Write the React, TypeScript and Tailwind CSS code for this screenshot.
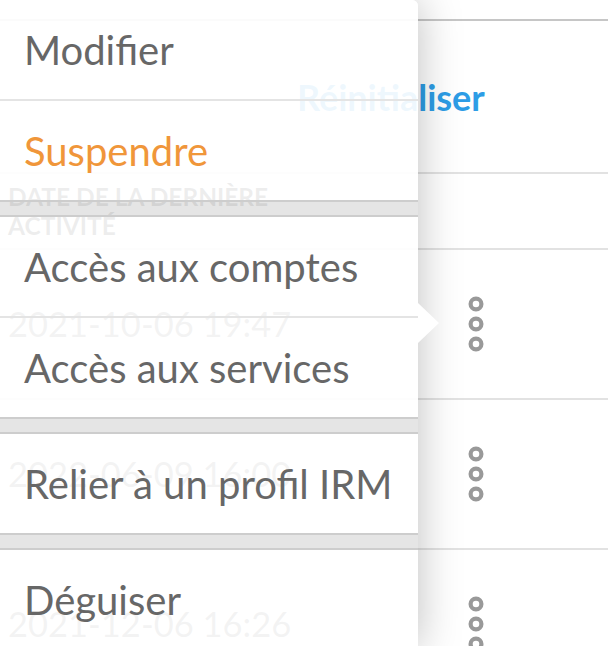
const menuGroups = [
  [
    { label: "Modifier", warn: false },
    { label: "Suspendre", warn: true },
  ],
  [
    { label: "Accès aux comptes", warn: false },
    { label: "Accès aux services", warn: false },
  ],
  [{ label: "Relier à un profil IRM", warn: false }],
  [{ label: "Déguiser", warn: false }],
];

const activityDates = ["2021-10-06 19:47", "2022-06-09 16:00", "2021-12-06 16:26"];

const KebabIcon = () => (
  <svg width="18" height="58" viewBox="0 0 18 58" fill="none">
    <circle cx="9" cy="9" r="5.4" stroke="#999999" strokeWidth="4.2" />
    <circle cx="9" cy="29" r="5.4" stroke="#999999" strokeWidth="4.2" />
    <circle cx="9" cy="49" r="5.4" stroke="#999999" strokeWidth="4.2" />
  </svg>
);

const ActionMenu = () => {
  return (
    <div className="absolute top-0 left-0 w-[418px] rounded-tr-[6px] shadow-[0_0_44px_rgba(0,0,0,0.26)]">
      {menuGroups.map((group, gi) => (
        <div key={gi}>
          {gi > 0 && (
            <div className="h-[17px] bg-[#e3e3e3]/[0.92] border-y-2 border-[#cdcdcd]" />
          )}
          {group.map((item, ii) => (
            <div
              key={item.label}
              className={`h-[99px] flex items-center pl-[24px] bg-white/[0.92] text-[40px] ${
                ii < group.length - 1 ? "border-b-2 border-[#e4e4e4] box-content" : ""
              } ${gi === 0 && ii === 0 ? "rounded-tr-[6px]" : ""} ${
                item.warn ? "text-[#f0963a]" : "text-[#676767]"
              }`}
            >
              {item.label}
            </div>
          ))}
        </div>
      ))}
      <div className="absolute left-full top-[303px] w-0 h-0 border-y-[20px] border-y-transparent border-l-[21px] border-l-white" />
    </div>
  );
};

export default function App() {
  return (
    <div
      className="relative w-full h-[646px] overflow-hidden bg-white"
      style={{ fontFamily: "Lato, 'Noto Sans', sans-serif" }}
    >
      <div className="h-[19px] border-b-2 border-[#c6c6c6] box-content" />
      <div className="h-[151px] flex items-center pl-[297px] border-b-2 border-[#e2e2e2] box-content">
        <span className="text-[36px] font-bold text-[#2d9de6]">Réinitialiser</span>
      </div>
      <div className="h-[74px] flex items-center pl-[8px] border-b-2 border-[#e2e2e2] box-content">
        <span className="w-[310px] text-[24.5px] leading-[29px] font-bold uppercase text-[#222222]">
          Date de la dernière activité
        </span>
      </div>
      {activityDates.map((date) => (
        <div
          key={date}
          className="h-[148px] flex items-center border-b-2 border-[#e2e2e2] box-content"
        >
          <div className="w-[440px] pl-[8px] text-[34.5px] text-[#6a6a6a]">{date}</div>
          <div className="w-[72px] flex justify-center">
            <KebabIcon />
          </div>
        </div>
      ))}
      <ActionMenu />
    </div>
  );
}
